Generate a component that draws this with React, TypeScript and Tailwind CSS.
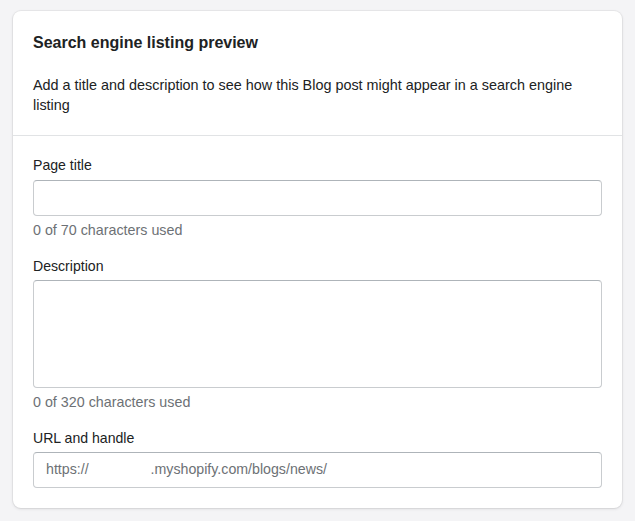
export default function App() {
  return (
    <div className="min-h-screen bg-[#f4f4f6] px-[13px] pt-[11px] font-['Liberation_Sans',Arial,sans-serif] text-[#202223]">
      <div className="rounded-lg bg-white shadow-[0_0_0_1px_rgba(63,63,68,0.06),0_1px_3px_0_rgba(63,63,68,0.15)]">
        <div className="border-b border-[#e1e3e5] px-5 pt-[22px] pb-[20px]">
          <h2 className="text-[16px] font-bold leading-5">Search engine listing preview</h2>
          <p className="mt-[22px] text-[14.4px] leading-[20px]">
            Add a title and description to see how this Blog post might appear in a search engine listing
          </p>
        </div>
        <div className="px-5 pt-[19px] pb-[20px]">
          <label className="block text-[14.1px] leading-5">Page title</label>
          <input className="mt-[5px] block h-[36px] w-full rounded-[4px] border border-[#c9cccf] border-t-[#aeb4b9] px-3 text-[14px] outline-none" />
          <p className="mt-[4px] text-[14.3px] leading-5 text-[#6d7175]">0 of 70 characters used</p>

          <label className="mt-[16px] block text-[14.1px] leading-5">Description</label>
          <textarea className="mt-[4px] block h-[108px] w-full resize-none rounded-[4px] border border-[#c9cccf] border-t-[#aeb4b9] px-3 text-[14px] outline-none" />
          <p className="mt-[4px] text-[14.3px] leading-5 text-[#6d7175]">0 of 320 characters used</p>

          <label className="mt-[16px] block text-[14.1px] leading-5">URL and handle</label>
          <div className="mt-[4px] flex h-[36px] w-full items-center rounded-[4px] border border-[#c9cccf] border-t-[#aeb4b9] px-3 text-[14.2px] text-[#6d7175]">
            <span>https://</span>
            <span className="inline-block w-[62px]" />
            <span>.myshopify.com/blogs/news/</span>
          </div>
        </div>
      </div>
    </div>
  )
}
